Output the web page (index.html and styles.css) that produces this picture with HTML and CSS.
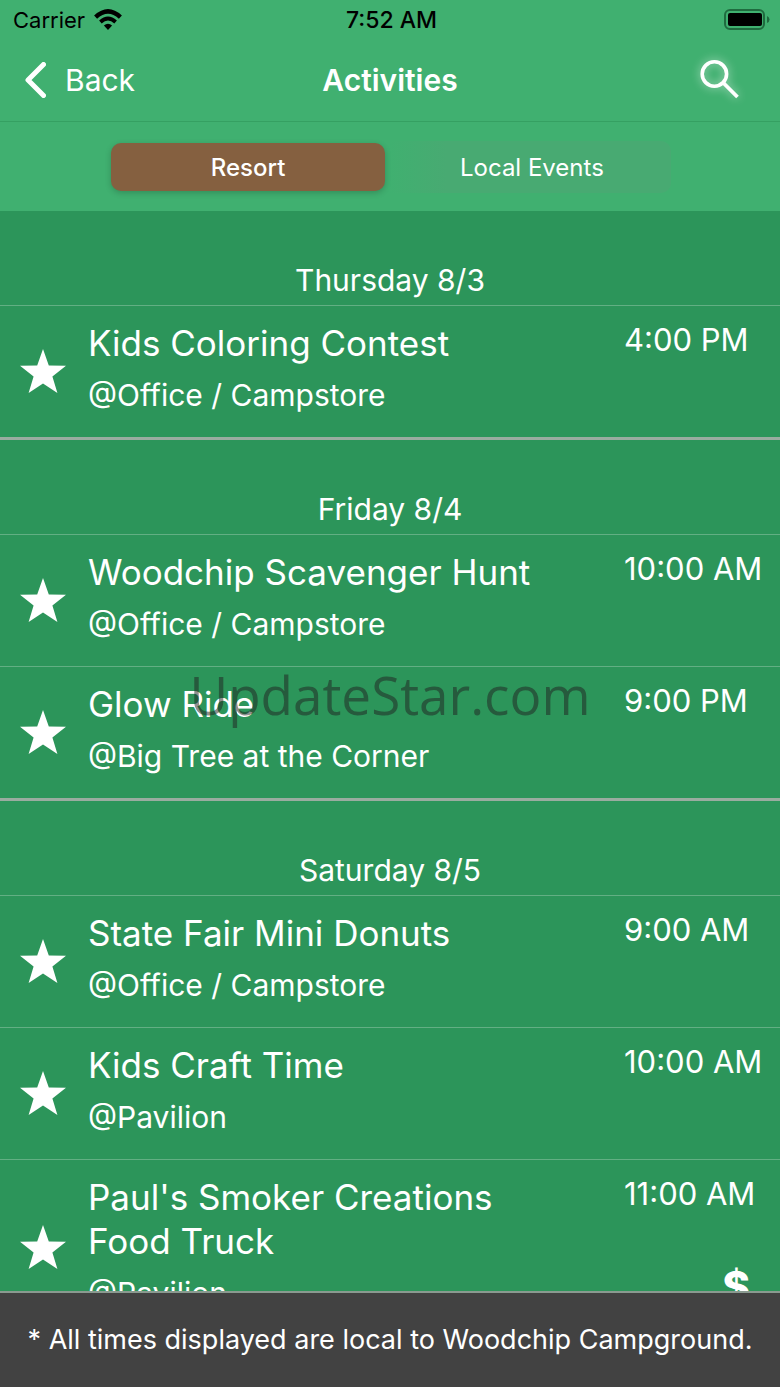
FILE: index.html
```
<!DOCTYPE html>
<html lang="en">
<head>
<meta charset="UTF-8">
<meta name="viewport" content="width=device-width, initial-scale=1.0">
<title>Activities</title>
<link rel="stylesheet" href="styles.css">
</head>
<body>
<svg class="sprite" aria-hidden="true">
    <symbol id="star" viewBox="0 0 46 44">
        <path d="M23 0 L28.8 16.4 L46 16.8 L32.4 27.4 L37.4 44 L23 34.6 L8.6 44 L13.6 27.4 L0 16.8 L17.2 16.4 Z"/>
    </symbol>
</svg>

<header class="top">
    <div class="status">
        <div class="carrier">
            <span>Carrier</span>
            <svg class="wifi" width="28" height="22" viewBox="0 0 28 22">
                <path d="M1.6 8.2 Q14 -3.4 26.4 8.2" fill="none" stroke="#000" stroke-width="4.4"/>
                <path d="M6.4 13 Q14 6 21.6 13" fill="none" stroke="#000" stroke-width="3.8"/>
                <path d="M9.9 16.6 Q14 13 18.1 16.6 L14 21 Z"/>
            </svg>
        </div>
        <span class="clock">7:52 AM</span>
        <svg class="battery" width="46" height="22" viewBox="0 0 46 22">
            <rect x="1" y="1" width="39" height="19" rx="5" fill="none" stroke="#1f6b3f" stroke-width="2"/>
            <rect x="4" y="4" width="34" height="13" rx="2"/>
            <path d="M43 7 Q45.5 8 45.5 10.5 Q45.5 13 43 14 Z" fill="#1f6b3f"/>
        </svg>
    </div>
    <nav class="nav">
        <button class="back">
            <svg width="22" height="36" viewBox="0 0 22 36">
                <path d="M19.5 2.5 L4 18 L19.5 33.5" fill="none" stroke="#fff" stroke-width="5" stroke-linecap="round" stroke-linejoin="round"/>
            </svg>
            <span>Back</span>
        </button>
        <h1>Activities</h1>
        <button class="search" aria-label="Search">
            <svg width="40" height="40" viewBox="0 0 40 40">
                <circle cx="15.4" cy="14" r="12.2" fill="none" stroke="#fff" stroke-width="3.6"/>
                <path d="M24 22.5 L38.5 37" stroke="#fff" stroke-width="3.8"/>
            </svg>
        </button>
    </nav>
</header>

<div class="tabs-bar">
    <div class="tabs">
        <button class="tab active">Resort</button>
        <button class="tab">Local Events</button>
    </div>
</div>

<main class="list">
    <section class="day">
        <h2>Thursday 8/3</h2>
        <article class="row">
            <svg class="star"><use href="#star"/></svg>
            <div class="info">
                <h3>Kids Coloring Contest</h3>
                <p>@Office / Campstore</p>
            </div>
            <div class="side"><time>4:00 PM</time></div>
        </article>
    </section>

    <section class="day">
        <h2>Friday 8/4</h2>
        <article class="row">
            <svg class="star"><use href="#star"/></svg>
            <div class="info">
                <h3>Woodchip Scavenger Hunt</h3>
                <p>@Office / Campstore</p>
            </div>
            <div class="side"><time>10:00 AM</time></div>
        </article>
        <article class="row">
            <svg class="star"><use href="#star"/></svg>
            <div class="info">
                <h3>Glow Ride</h3>
                <p>@Big Tree at the Corner</p>
            </div>
            <div class="side"><time>9:00 PM</time></div>
        </article>
    </section>

    <section class="day">
        <h2>Saturday 8/5</h2>
        <article class="row">
            <svg class="star"><use href="#star"/></svg>
            <div class="info">
                <h3>State Fair Mini Donuts</h3>
                <p>@Office / Campstore</p>
            </div>
            <div class="side"><time>9:00 AM</time></div>
        </article>
        <article class="row">
            <svg class="star"><use href="#star"/></svg>
            <div class="info">
                <h3>Kids Craft Time</h3>
                <p>@Pavilion</p>
            </div>
            <div class="side"><time>10:00 AM</time></div>
        </article>
        <article class="row">
            <svg class="star"><use href="#star"/></svg>
            <div class="info">
                <h3>Paul's Smoker Creations Food Truck</h3>
                <p>@Pavilion</p>
            </div>
            <div class="side"><time>11:00 AM</time><span class="paid">$</span></div>
        </article>
    </section>
</main>

<footer class="note">* All times displayed are local to Woodchip Campground.</footer>

<div class="watermark">UpdateStar.com</div>
</body>
</html>
```
FILE: styles.css
```
* {
    box-sizing: border-box;
}
body {
    margin: 0;
    height: 100vh;
    display: flex;
    flex-direction: column;
    overflow: hidden;
    font-family: Inter, "Liberation Sans", sans-serif;
    background: #2c955a;
    color: #fff;
}
h1, h2, h3, p {
    margin: 0;
    font-weight: 400;
}
button {
    padding: 0;
    border: none;
    background: none;
    color: inherit;
    font-family: inherit;
    cursor: pointer;
}
.sprite {
    display: none;
}

/* status bar + title */
.top {
    background: #40b070;
    border-bottom: 1px solid #35a062;
}
.status {
    display: grid;
    grid-template-columns: 1fr auto 1fr;
    align-items: center;
    height: 40px;
    padding: 0 10px 0 13px;
    color: #000;
    font-size: 22px;
}
.carrier {
    display: flex;
    align-items: center;
    gap: 9px;
}
.clock {
    font-size: 23px;
    font-weight: 500;
}
.battery {
    justify-self: end;
}
.nav {
    display: grid;
    grid-template-columns: 1fr auto 1fr;
    align-items: center;
    height: 81px;
    padding: 0 24px 2px;
}
.back {
    display: flex;
    align-items: center;
    gap: 19px;
    font-size: 30px;
}
.nav h1 {
    font-size: 30px;
    font-weight: 600;
}
.search {
    justify-self: end;
    height: 40px;
    margin-right: 17px;
    filter: drop-shadow(0 0 5px rgba(255,255,255,0.6));
}

/* segmented switch */
.tabs-bar {
    padding: 19px 0 18px;
    background: #40b070;
}
.tabs {
    display: grid;
    grid-template-columns: 1fr 1fr;
    gap: 10px;
    width: 72%;
    margin: 0 auto;
    padding: 2px;
    border-radius: 10px;
    background: linear-gradient(90deg, #40b070 50%, #48aa72 60%);
}
.tab {
    height: 48px;
    border-radius: 10px;
    font-size: 24px;
}
.tab.active {
    background: #856040;
    font-weight: 500;
    box-shadow: 0 2px 6px rgba(0,0,0,0.2);
}

/* activities */
.list {
    flex: 1;
    min-height: 0;
    overflow: hidden;
}
.day {
    border-bottom: 3px solid #9aaca0;
}
.day h2 {
    padding: 46px 0 2px;
    font-size: 30px;
    line-height: 46px;
    text-align: center;
}
.row {
    display: grid;
    grid-template-columns: 88px 1fr 156px;
    border-top: 1px solid #62af83;
    padding: 15px 0 20px;
}
.star {
    width: 46px;
    height: 44px;
    margin: 4px 0 0 20px;
    align-self: center;
    fill: #fff;
}
.info h3 {
    max-width: 450px;
    font-size: 35px;
    line-height: 44px;
}
.info p {
    margin-top: 8px;
    font-size: 30px;
    line-height: 44px;
}
.side {
    display: flex;
    flex-direction: column;
    justify-content: space-between;
    font-size: 31px;
    line-height: 38px;
}
.paid {
    padding-right: 30px;
    font-size: 42px;
    line-height: 56px;
    font-weight: 800;
    text-align: right;
}

.note {
    padding: 24px 8px;
    border-top: 2px solid #8a9a90;
    background: #424242;
    font-size: 27px;
    line-height: 46px;
    text-align: center;
}
.watermark {
    position: fixed;
    top: 50%;
    left: 50%;
    transform: translate(-50%, -50%);
    font-family: "Open Sans", sans-serif;
    font-size: 53px;
    color: rgba(32,32,32,0.5);
    pointer-events: none;
}
```
